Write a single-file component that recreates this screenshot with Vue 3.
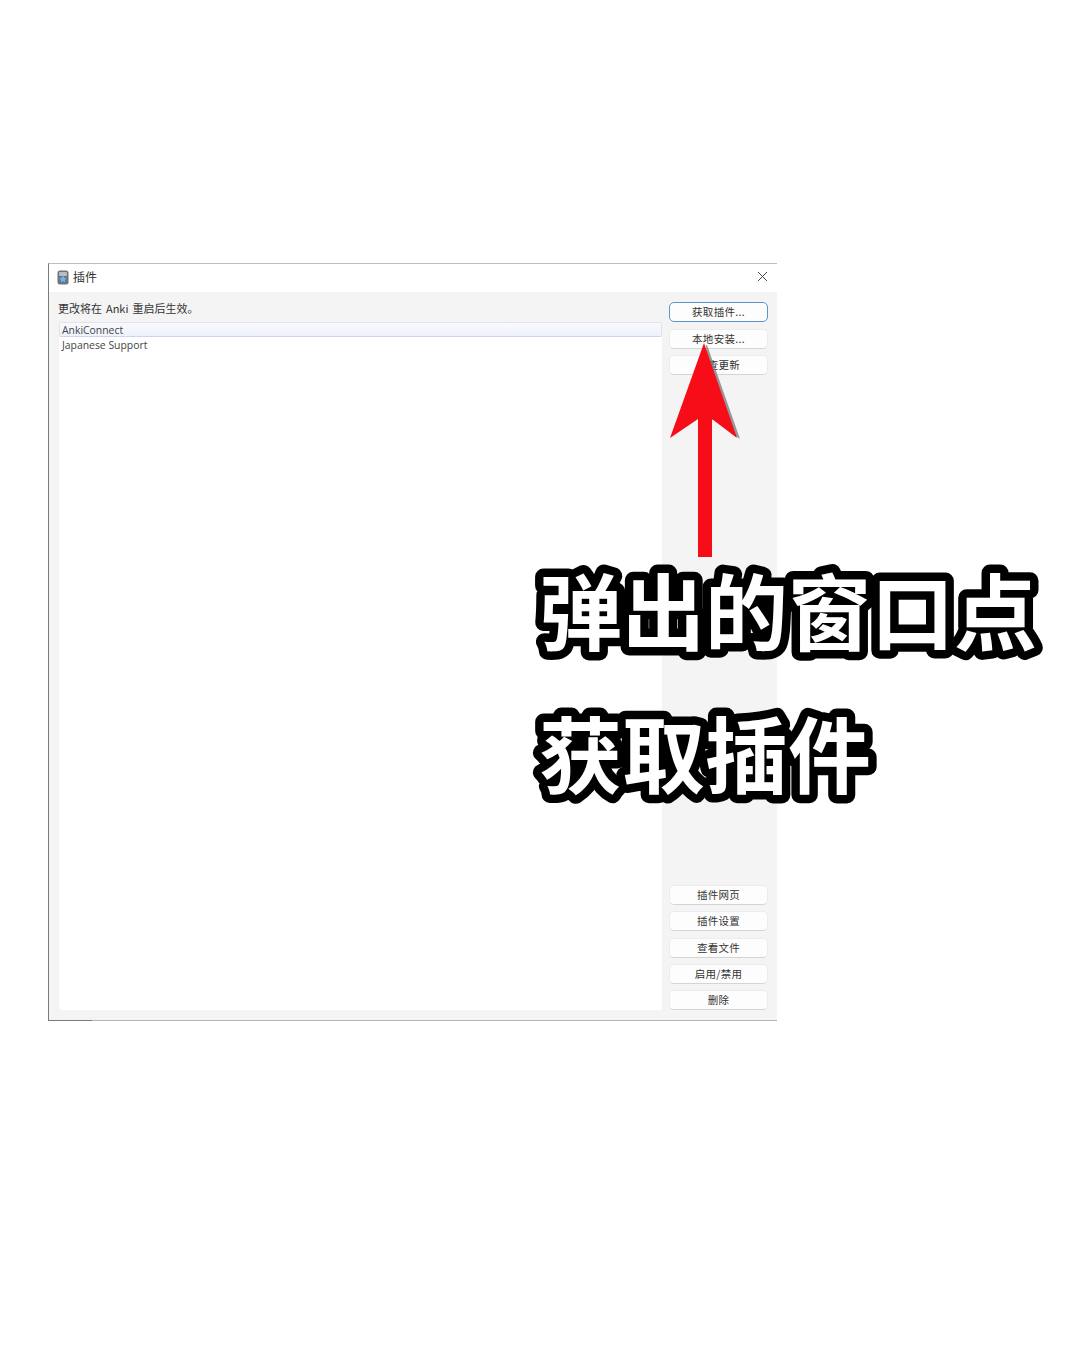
<template>
  <div class="page">
    <div class="window">
      <div class="titlebar">
        <svg class="app-icon" width="12" height="15" viewBox="0 0 12 15">
          <rect x="0.5" y="0.5" width="11" height="14" rx="2.5" fill="#6d737b" />
          <rect x="2" y="2" width="8" height="4" rx="1" fill="#b9bdc3" />
          <path d="M6 5.5l1.3 2.2 2.3.5-1.6 1.7.3 2.3L6 11.3l-2.3 1 .3-2.4-1.6-1.7 2.3-.5z" fill="#6db3ea" />
        </svg>
        <span class="title">插件</span>
        <svg class="close" width="11" height="11" viewBox="0 0 11 11">
          <path d="M1 1l9 9M10 1l-9 9" stroke="#444" stroke-width="1" fill="none" />
        </svg>
      </div>
      <div class="body">
        <div class="left">
          <div class="hint">更改将在 Anki 重启后生效。</div>
          <div class="list">
            <div v-for="(item, i) in addons" :key="item" class="row" :class="{ selected: i === 0 }">{{ item }}</div>
          </div>
        </div>
        <div class="side">
          <div class="btn-group top">
            <button v-for="(b, i) in topButtons" :key="b" class="btn" :class="{ primary: i === 0 }">{{ b }}</button>
          </div>
          <div class="btn-group">
            <button v-for="b in bottomButtons" :key="b" class="btn">{{ b }}</button>
          </div>
        </div>
      </div>
      <div class="edge-mark"></div>
    </div>

    <svg class="arrow" width="80" height="220" viewBox="0 0 80 220">
      <path d="M37 2L70 96 44 77H41L36 2z" fill="#777" opacity="0.75" />
      <path d="M34 0L67 95 42 76V214H28V76L0 95z" fill="#f60d18" />
    </svg>

    <svg class="caption" width="560" height="270" viewBox="0 0 560 270">
      <text class="caption-text" x="24" y="87">弹出的窗口点</text>
      <text class="caption-text" x="24" y="230">获取插件</text>
    </svg>
  </div>
</template>

<script setup>
const addons = ['AnkiConnect', 'Japanese Support']
const topButtons = ['获取插件...', '本地安装...', '检查更新']
const bottomButtons = ['插件网页', '插件设置', '查看文件', '启用/禁用', '删除']
</script>

<style>
html, body { margin: 0; background: #fff; }
</style>

<style scoped>
.page { position: relative; width: 1080px; height: 1350px; padding: 263px 0 0 48px; box-sizing: border-box; background: #fff; overflow: hidden; font-family: "Noto Sans CJK SC", "Noto Sans", sans-serif; }
.window { position: relative; width: 729px; height: 758px; box-sizing: border-box; display: flex; flex-direction: column; background: #f4f4f4; border-top: 1px solid #bdbdbd; border-left: 1px solid #7a7a7a; border-bottom: 1px solid #b4b4b4; }
.titlebar { height: 28px; flex: none; box-sizing: border-box; display: flex; align-items: center; padding: 0 9px 4px 8px; background: #fff; }
.app-icon { flex: none; margin-top: 3px; }
.title { margin-left: 4px; font-size: 12px; color: #333; }
.close { margin-left: auto; }
.body { flex: 1; display: flex; min-height: 0; padding: 0 10px 10px 10px; }
.left { width: 603px; flex: none; display: flex; flex-direction: column; }
.hint { height: 30px; flex: none; box-sizing: border-box; padding-top: 8px; font-size: 11px; line-height: 16px; color: #333; white-space: pre; margin-left: -1px; word-spacing: 1.5px; }
.list { flex: 1; background: #fff; border-radius: 3px; font-family: "Open Sans", "Noto Sans", sans-serif; }
.row { height: 15px; line-height: 17px; padding-left: 3px; font-size: 10.4px; color: #444; }
.row.selected { box-sizing: border-box; line-height: 14px; background: linear-gradient(#f8fafd, #eef2fa); border: 1px solid #dfe4f0; border-bottom-color: #cdd5ec; border-radius: 2px; padding-left: 2px; }
.side { flex: 1; display: flex; flex-direction: column; justify-content: space-between; padding: 10px 0 0 7px; margin-right: -1px; }
.btn-group { display: flex; flex-direction: column; gap: 6.2px; }
.btn-group.top { gap: 6.7px; }
.btn { width: 99px; height: 20px; padding: 0; box-sizing: border-box; background: #fdfdfd; border: 1px solid #ececec; border-bottom-color: #d4d4d4; border-radius: 5px; font-family: inherit; font-size: 10.5px; line-height: 18px; color: #333; letter-spacing: 0.3px; }
.btn.primary { border-color: #5d94c9; }
.edge-mark { position: absolute; left: -1px; bottom: -1px; width: 44px; height: 1px; background: #7a7a7a; }
.arrow { position: absolute; left: 670px; top: 343px; }
.caption { position: absolute; left: 515px; top: 557px; }
.caption-text { font-family: "Noto Sans CJK SC", sans-serif; font-weight: 700; font-size: 83px; fill: #fff; stroke: #000; stroke-width: 17px; stroke-linejoin: round; stroke-linecap: round; paint-order: stroke fill; }
</style>
